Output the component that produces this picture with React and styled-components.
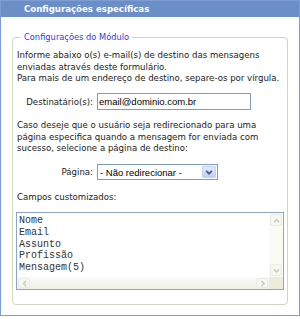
import React from "react";
import styled, { createGlobalStyle } from "styled-components";

const Global = createGlobalStyle`
  html, body { margin: 0; padding: 0; background: #ffffff; }
  body { font-family: "DejaVu Sans", Verdana, sans-serif; }
  * { box-sizing: border-box; }
`;

const Panel = styled.div`
  width: 300px;
  height: 316px;
  border: 1px solid #7d9cd1;
  display: flex;
  flex-direction: column;
  background: #fff;
`;

const Header = styled.div`
  height: 16px;
  background: #6b8ec7;
  color: #ffffff;
  font-family: "DejaVu Sans", Verdana, sans-serif;
  font-weight: bold;
  font-size: 8.6px;
  padding-left: 23px;
  display: flex;
  align-items: center;
`;

const Body = styled.div`
  flex: 1;
  padding: 14px 11px 10px 11px;
`;

const Fieldset = styled.fieldset`
  margin: 0;
  border: 1px solid #d6d3c4;
  border-radius: 4px;
  padding: 7px 3px 14px 3px;
  min-width: 0;
`;

const Legend = styled.legend`
  margin-left: 5px;
  padding: 0 3px;
  color: #3838dc;
  font-size: 8.3px;
  line-height: 12px;
`;

const Text = styled.p`
  margin: ${(p) => p.$mt || 0}px 0 0 1px;
  font-size: 8.6px;
  line-height: 11.5px;
  color: #222222;
  white-space: nowrap;
`;

const FormRow = styled.div`
  display: grid;
  grid-template-columns: 77px auto;
  column-gap: 4px;
  align-items: center;
  margin-top: ${(p) => p.$mt || 0}px;
`;

const Label = styled.label`
  text-align: right;
  font-size: 8.6px;
  color: #222222;
  white-space: nowrap;
`;

const Input = styled.div`
  width: 154px;
  height: 17px;
  border: 1px solid #7f9db9;
  background: #fff;
  font-family: "Liberation Sans", Arial, sans-serif;
  font-size: 9.5px;
  color: #000;
  padding-left: 1px;
  display: flex;
  align-items: center;
`;

const Select = styled.div`
  width: 121px;
  height: 16px;
  border: 1px solid #7f9db9;
  background: #fff;
  display: flex;
  align-items: stretch;
  justify-content: space-between;
  padding: 1px;
`;

const SelectText = styled.span`
  font-family: "Liberation Sans", Arial, sans-serif;
  font-size: 9.5px;
  color: #000;
  padding-left: 1px;
  display: flex;
  align-items: center;
`;

const SelectButton = styled.span`
  width: 14px;
  border: 1px solid #c0d2f8;
  border-radius: 1px;
  background: linear-gradient(#e3ebfe, #bdd0f8);
  display: flex;
  align-items: center;
  justify-content: center;
`;

const TextArea = styled.div`
  margin-top: ${(p) => p.$mt || 0}px;
  height: 78px;
  border: 1px solid #8fa5c8;
  display: grid;
  grid-template-columns: 1fr 14px;
  grid-template-rows: 1fr 12px;
  background: #fff;
`;

const TextContent = styled.div`
  padding: 2px 0 0 2px;
  font-family: "Liberation Mono", "Courier New", monospace;
  font-size: 10px;
  line-height: 11.8px;
  color: #333;
  white-space: pre;
  overflow: hidden;
`;

const VScroll = styled.div`
  background: #fbfbf5;
  display: flex;
  flex-direction: column;
  justify-content: space-between;
  padding: 1px;
`;

const HScroll = styled.div`
  background: linear-gradient(#fbfbf7, #f0f0e8);
  display: flex;
  justify-content: space-between;
  padding: 1px;
`;

const ScrollBtn = styled.span`
  width: ${(p) => p.$w}px;
  height: ${(p) => p.$h}px;
  border: 1px solid #ecebe2;
  border-radius: 2px;
  background: #f7f7f1;
  display: flex;
  align-items: center;
  justify-content: center;
`;

const Corner = styled.div`
  background: #edebdc;
`;

const Chevron = ({ dir, color = "#c9c9c0", size = 7, w = 1.4 }) => {
  const pts = {
    up: "1,5 3.5,2.5 6,5",
    down: "1,2.5 3.5,5 6,2.5",
    left: "5,1 2.5,3.5 5,6",
    right: "2.5,1 5,3.5 2.5,6",
  }[dir];
  return (
    <svg width={size} height={size} viewBox="0 0 7 7">
      <polyline points={pts} fill="none" stroke={color} strokeWidth={w} />
    </svg>
  );
};

export default function App() {
  return (
    <>
      <Global />
      <Panel>
        <Header>Configurações específicas</Header>
        <Body>
          <Fieldset>
            <Legend>Configurações do Módulo</Legend>
            <Text>
              Informe abaixo o(s) e-mail(s) de destino das mensagens
              <br />
              enviadas através deste formulário.
              <br />
              Para mais de um endereço de destino, separe-os por vírgula.
            </Text>
            <FormRow $mt={8.5}>
              <Label>Destinatário(s):</Label>
              <Input>email@dominio.com.br</Input>
            </FormRow>
            <Text $mt={10}>
              Caso deseje que o usuário seja redirecionado para uma
              <br />
              página especifica quando a mensagem for enviada com
              <br />
              sucesso, selecione a página de destino:
            </Text>
            <FormRow $mt={9.5}>
              <Label>Página:</Label>
              <Select>
                <SelectText>- Não redirecionar -</SelectText>
                <SelectButton>
                  <Chevron dir="down" color="#4d6185" size={8} w={1.7} />
                </SelectButton>
              </Select>
            </FormRow>
            <Text $mt={12}>Campos customizados:</Text>
            <TextArea $mt={8.5}>
              <TextContent>{"Nome\nEmail\nAssunto\nProfissão\nMensagem(5)"}</TextContent>
              <VScroll>
                <ScrollBtn $w={12} $h={12}>
                  <Chevron dir="up" />
                </ScrollBtn>
                <ScrollBtn $w={12} $h={12}>
                  <Chevron dir="down" />
                </ScrollBtn>
              </VScroll>
              <HScroll>
                <ScrollBtn $w={12} $h={10}>
                  <Chevron dir="left" />
                </ScrollBtn>
                <ScrollBtn $w={12} $h={10}>
                  <Chevron dir="right" />
                </ScrollBtn>
              </HScroll>
              <Corner />
            </TextArea>
          </Fieldset>
        </Body>
      </Panel>
    </>
  );
}
